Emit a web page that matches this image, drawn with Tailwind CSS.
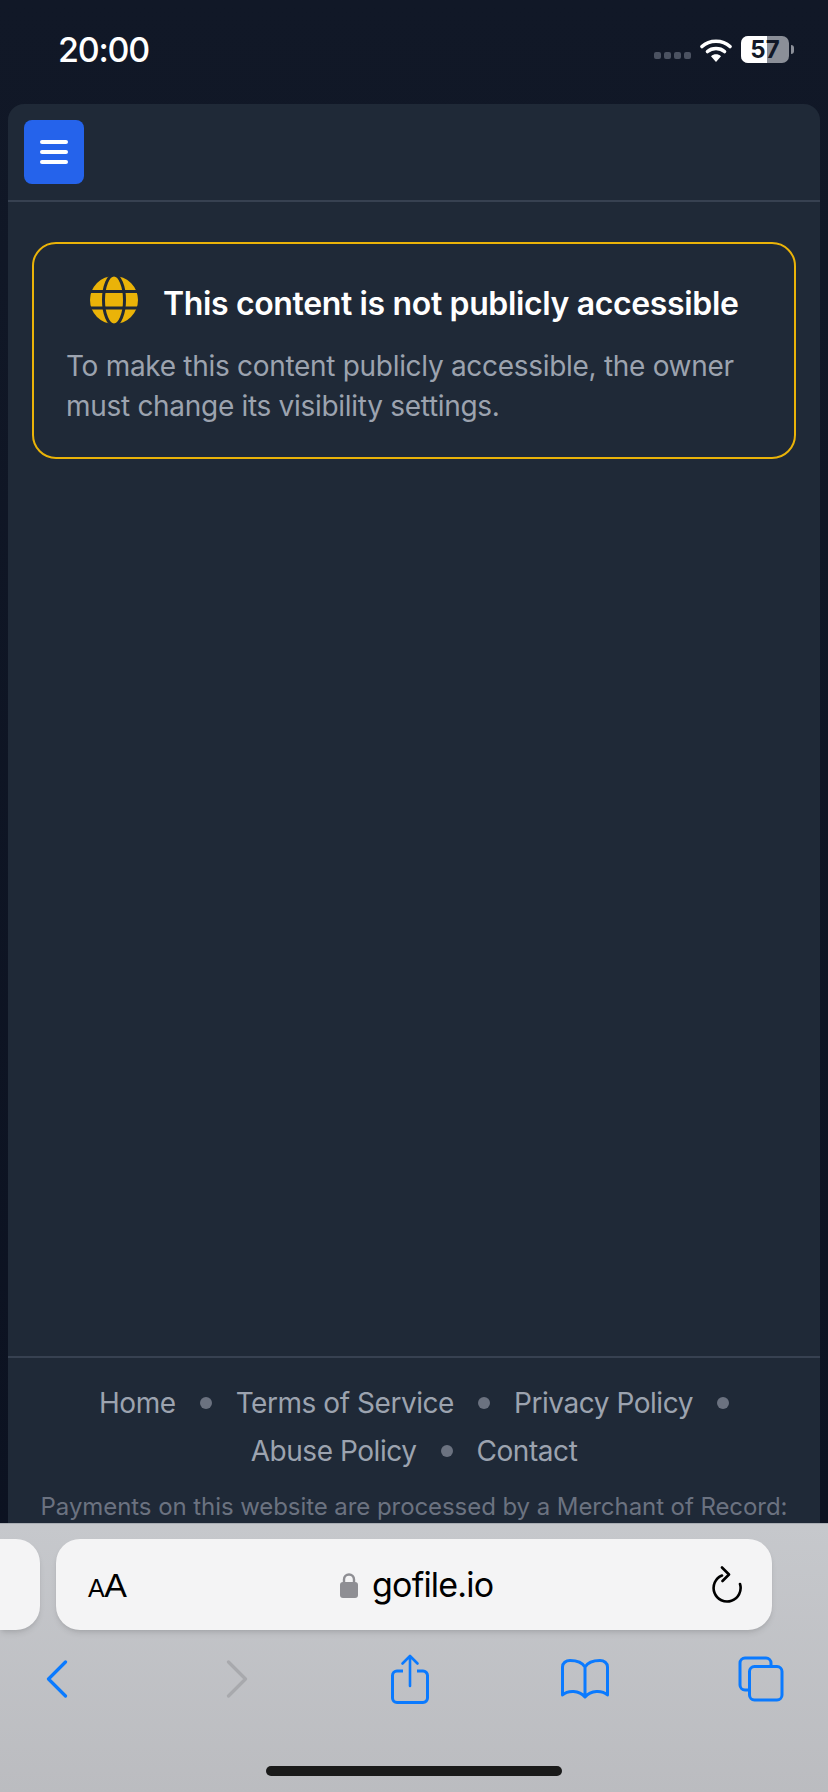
<!DOCTYPE html>
<html lang="en">
<head>
    <meta charset="UTF-8">
    <meta name="viewport" content="width=device-width, initial-scale=1.0">
    <title>gofile.io</title>
    <script src="https://cdn.jsdelivr.net/npm/@tailwindcss/browser@4"></script>
</head>
<body class="bg-[#111827]">
    <div class="w-[828px] h-[1792px] flex flex-col overflow-hidden bg-gradient-to-b from-[#111827] to-[#0b1120] font-['Inter',sans-serif]">
        <!-- Status bar -->
        <div class="h-[104px] shrink-0 flex items-start pl-[58px] pr-[34px] pt-[30px]">
            <span class="text-[34px] leading-[40px] font-medium tracking-[-1.2px] text-white">20:00</span>
            <div class="ml-auto flex items-center mt-[6px]">
                <div class="flex gap-[2.5px] mt-[11px]">
                    <span class="w-[7.5px] h-[7px] rounded-[2px] bg-[#4b5261]"></span>
                    <span class="w-[7.5px] h-[7px] rounded-[2px] bg-[#4b5261]"></span>
                    <span class="w-[7.5px] h-[7px] rounded-[2px] bg-[#4b5261]"></span>
                    <span class="w-[7.5px] h-[7px] rounded-[2px] bg-[#4b5261]"></span>
                </div>
                <svg class="ml-[9px]" width="32" height="24" viewBox="0 0 32 24" fill="none">
                    <path d="M2 8.5C9.5 1.5 22.5 1.5 30 8.5" stroke="#fff" stroke-width="3.6" stroke-linecap="round"/>
                    <path d="M7.5 13.5C12 9.5 20 9.5 24.5 13.5" stroke="#fff" stroke-width="3.6" stroke-linecap="round"/>
                    <path d="M16 24L11 18.2C14 15.6 18 15.6 21 18.2Z" fill="#fff"/>
                </svg>
                <div class="ml-[9px] w-[48px] h-[27px] rounded-[7px] overflow-hidden relative bg-[#8b8f98] flex items-center justify-center">
                    <span class="absolute left-0 top-0 bottom-0 w-[26px] bg-white"></span>
                    <span class="relative text-[24px] leading-none font-bold text-[#111827]">57</span>
                </div>
                <span class="ml-[2px] w-[3px] h-[9px] rounded-r-full bg-[#8b8f98]"></span>
            </div>
        </div>

        <!-- Main panel -->
        <div class="flex-1 mx-[8px] rounded-t-[16px] bg-[#1f2937] flex flex-col min-h-0 overflow-hidden">
            <div class="h-[98px] shrink-0 border-b-2 border-[#374151] pl-[16px] pt-[16px]">
                <button class="w-[60px] h-[64px] rounded-[8px] bg-[#2563eb] flex flex-col items-center justify-center gap-[6px]">
                    <span class="w-[28px] h-[4px] rounded-full bg-white"></span>
                    <span class="w-[28px] h-[4px] rounded-full bg-white"></span>
                    <span class="w-[28px] h-[4px] rounded-full bg-white"></span>
                </button>
            </div>

            <div class="mt-[40px] ml-[24px] w-[764px] h-[217px] rounded-[24px] border-2 border-[#eab308] px-[32px] pt-[32px]">
                <div class="flex items-center pl-[24px]">
                    <svg width="48" height="48" viewBox="0 0 48 48" class="shrink-0">
                        <circle cx="24" cy="24" r="24" fill="#eab308"/>
                        <path d="M0 15.5H48M0 32H48" stroke="#1f2937" stroke-width="3"/>
                        <ellipse cx="24" cy="24" rx="10.5" ry="25" fill="none" stroke="#1f2937" stroke-width="3"/>
                    </svg>
                    <h1 class="ml-[25px] relative top-[4px] text-[32px] leading-[48px] font-semibold tracking-[-0.36px] text-white whitespace-nowrap">This content is not publicly accessible</h1>
                </div>
                <p class="mt-[22px] text-[28px] leading-[40px] tracking-[-0.3px] text-[#9ca3af]">To make this content publicly accessible, the owner must change its visibility settings.</p>
            </div>

            <!-- Footer -->
            <div class="mt-auto h-[167px] shrink-0 border-t-2 border-[#374151] pt-[21px] flex flex-col items-center overflow-hidden">
                <div class="flex items-center gap-[24px] text-[28px] leading-[48px] tracking-[-0.45px] text-[#9ca3af]">
                    <span>Home</span>
                    <span class="w-[12px] h-[12px] rounded-full bg-[#6b7280]"></span>
                    <span>Terms of Service</span>
                    <span class="w-[12px] h-[12px] rounded-full bg-[#6b7280]"></span>
                    <span>Privacy Policy</span>
                    <span class="w-[12px] h-[12px] rounded-full bg-[#6b7280]"></span>
                </div>
                <div class="flex items-center gap-[24px] text-[28px] leading-[48px] tracking-[-0.45px] text-[#9ca3af]">
                    <span>Abuse Policy</span>
                    <span class="w-[12px] h-[12px] rounded-full bg-[#6b7280]"></span>
                    <span>Contact</span>
                </div>
                <p class="mt-[14px] text-[24px] leading-[36px] tracking-[-0.07px] text-[#6b7280] whitespace-nowrap">Payments on this website are processed by a Merchant of Record:</p>
            </div>
        </div>

        <!-- Safari toolbar -->
        <div class="h-[269px] shrink-0 border-t border-[#a9adb3] bg-gradient-to-b from-[#c6c8cc] to-[#bbbcc0] flex flex-col">
            <div class="mt-[15px] h-[91px] flex gap-[16px]">
                <div class="w-[40px] rounded-r-[24px] bg-[#f4f4f5] shadow-md"></div>
                <div class="w-[716px] rounded-[24px] bg-[#f4f4f5] shadow-md flex items-center pl-[32px] pr-[29px] relative">
                    <span class="text-black font-['Liberation_Sans',sans-serif] leading-none tracking-[-0.5px]"><span class="text-[25px]">A</span><span class="text-[34px]">A</span></span>
                    <div class="absolute left-[284px] top-0 bottom-0 flex items-center">
                        <svg width="18" height="26" viewBox="0 0 18 26" fill="none">
                            <path d="M4 12V7.5a5 5 0 0 1 10 0V12" stroke="#8e8e93" stroke-width="2.4"/>
                            <rect y="10" width="18" height="16" rx="3" fill="#8e8e93"/>
                        </svg>
                        <span class="ml-[14px] text-[34px] leading-none tracking-[-0.8px] text-black">gofile.io</span>
                    </div>
                    <svg class="ml-auto" width="32" height="38" viewBox="0 0 32 38" fill="none">
                        <path d="M11 7.5A13.5 13.5 0 1 0 29 16" stroke="#000" stroke-width="2.6" stroke-linecap="round" transform="translate(0 2)"/>
                        <path d="M11 1.5L18 8.5L11.5 15" stroke="#000" stroke-width="2.6" stroke-linecap="round" stroke-linejoin="round"/>
                    </svg>
                </div>
            </div>

            <div class="mt-[24px] h-[50px] pl-[33px] flex items-center">
                <div class="w-[48px] flex justify-center">
                    <svg width="22" height="38" viewBox="0 0 22 38" fill="none"><path d="M19.5 2L2.5 19L19.5 36" stroke="#0a7aff" stroke-width="3.2" stroke-linecap="round" stroke-linejoin="round"/></svg>
                </div>
                <div class="ml-[132px] w-[48px] flex justify-center">
                    <svg width="22" height="38" viewBox="0 0 22 38" fill="none"><path d="M2.5 2L19.5 19L2.5 36" stroke="#a8a9ad" stroke-width="3.2" stroke-linecap="round" stroke-linejoin="round"/></svg>
                </div>
                <div class="ml-[125px] w-[48px] flex justify-center">
                    <svg width="38" height="50" viewBox="0 0 38 50" fill="none">
                        <path d="M12 17H6a4.5 4.5 0 0 0-4.5 4.5V44A4.5 4.5 0 0 0 6 48.5H32a4.5 4.5 0 0 0 4.5-4.5V21.5A4.5 4.5 0 0 0 32 17H26" stroke="#0a7aff" stroke-width="3"/>
                        <path d="M19 32V2M11.5 9.5L19 2L26.5 9.5" stroke="#0a7aff" stroke-width="2.6" stroke-linecap="round" stroke-linejoin="round"/>
                    </svg>
                </div>
                <div class="ml-[127px] w-[48px] flex justify-center">
                    <svg width="48" height="40" viewBox="0 0 48 40" fill="none">
                        <path d="M24 8C21 3 15 1.5 9 1.5C5 1.5 1.5 4 1.5 8V36C7 31 18 31 24 38C30 31 41 31 46.5 36V8C46.5 4 43 1.5 39 1.5C33 1.5 27 3 24 8ZM24 8V37" stroke="#0a7aff" stroke-width="3" stroke-linejoin="round"/>
                    </svg>
                </div>
                <div class="ml-[128px] w-[48px] flex justify-center">
                    <svg width="46" height="46" viewBox="0 0 46 46" fill="none">
                        <path d="M33 9V7a5 5 0 0 0-5-5H7a5 5 0 0 0-5 5v22a5 5 0 0 0 5 5h3" stroke="#0a7aff" stroke-width="3"/>
                        <rect x="11.5" y="10.5" width="32.5" height="33.5" rx="5" stroke="#0a7aff" stroke-width="3"/>
                    </svg>
                </div>
            </div>

            <div class="mt-[62px] ml-[266px] w-[296px] h-[10px] rounded-full bg-[#1a1a1a]"></div>
        </div>
    </div>
</body>
</html>
